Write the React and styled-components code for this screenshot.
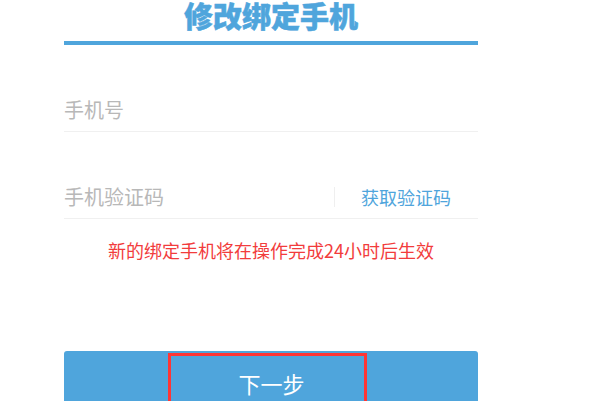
import React from "react";
import styled, { createGlobalStyle } from "styled-components";

const Global = createGlobalStyle`
  html, body { margin: 0; padding: 0; background: #fff; }
  body { font-family: "Noto Sans CJK SC", "Noto Sans", sans-serif; overflow: hidden; }
`;

const Page = styled.div`
  width: 414px;
  margin-left: 64px;
  display: flex;
  flex-direction: column;
`;

const Title = styled.h1`
  margin: 0;
  font-size: 29px;
  line-height: 31px;
  font-weight: 900;
  color: #4fa5dc;
  -webkit-text-stroke: 0.5px #4fa5dc;
  text-align: center;
  border-bottom: 4px solid #4fa5dc;
  box-sizing: border-box;
  height: 45px;
`;

const Form = styled.div`
  display: flex;
  flex-direction: column;
  padding-top: 43px;
`;

const Field = styled.div`
  display: flex;
  align-items: center;
  height: 43px;
  border-bottom: 1px solid #f0f0f0;
  margin-top: ${(p) => p.$gap || 0}px;
`;

const Input = styled.input`
  flex: 1;
  min-width: 0;
  border: none;
  outline: none;
  padding: 0;
  font-family: inherit;
  font-size: 20px;
  color: #333;
  background: transparent;
  &::placeholder { color: #b8b8b8; }
`;

const CodeButton = styled.button`
  border: none;
  background: transparent;
  border-left: 1px solid #efefef;
  height: 20px;
  padding: 0 27px 0 26px;
  font-family: inherit;
  font-size: 18px;
  line-height: 20px;
  color: #4fa5dc;
  cursor: pointer;
`;

const Notice = styled.p`
  margin: 19px 0 0;
  text-align: center;
  font-size: 18px;
  line-height: 24px;
  color: #f23c3c;
`;

const NextButton = styled.button`
  position: relative;
  margin-top: 89px;
  height: 64px;
  border: none;
  border-radius: 3px;
  background: #4fa5dc;
  color: #fff;
  font-family: inherit;
  font-size: 22px;
  padding: 0;
  padding-left: 1px;
  cursor: pointer;
`;

const Highlight = styled.span`
  position: absolute;
  left: 104px;
  top: 2px;
  width: 199px;
  height: 60px;
  box-sizing: border-box;
  border: 3px solid #ff3535;
  pointer-events: none;
`;

export default function App() {
  return (
    <>
      <Global />
      <Page>
        <Title>修改绑定手机</Title>
        <Form>
          <Field>
            <Input placeholder="手机号" />
          </Field>
          <Field $gap={43}>
            <Input placeholder="手机验证码" />
            <CodeButton>获取验证码</CodeButton>
          </Field>
          <Notice>新的绑定手机将在操作完成24小时后生效</Notice>
          <NextButton>
            下一步
            <Highlight />
          </NextButton>
        </Form>
      </Page>
    </>
  );
}
